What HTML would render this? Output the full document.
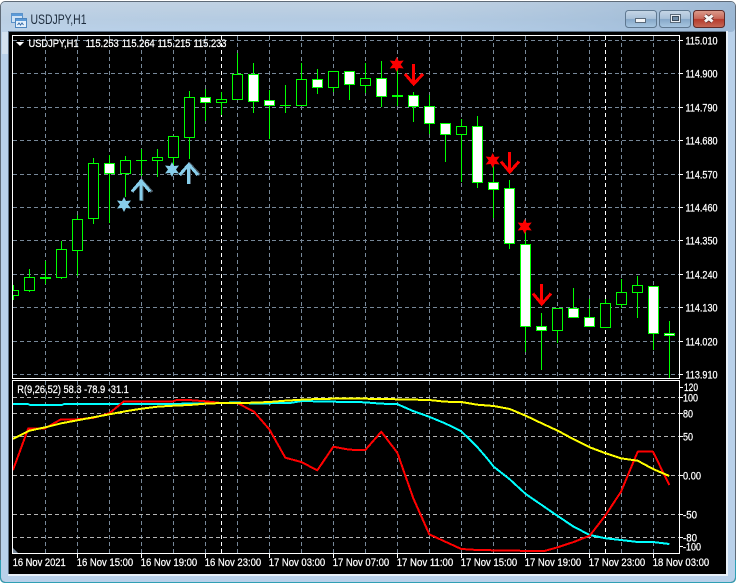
<!DOCTYPE html>
<html><head><meta charset="utf-8"><title>USDJPY,H1</title>
<style>
html,body{margin:0;padding:0;background:#fff;width:737px;height:584px;overflow:hidden}
svg{position:absolute;left:0;top:0;display:block}
text{font-family:"Liberation Sans",sans-serif;fill:#fff;font-size:11px;stroke:#fff;stroke-width:.25px}
</style></head><body>
<svg width="737" height="584" viewBox="0 0 737 584" xmlns="http://www.w3.org/2000/svg">
<defs>
<linearGradient id="tb" x1="0" y1="0" x2="0" y2="1"><stop offset="0" stop-color="#c3d3e3"/><stop offset=".6" stop-color="#b4cbe2"/><stop offset="1" stop-color="#b7d0ea"/></linearGradient>
<linearGradient id="tr" x1="0" y1="0" x2="1" y2="0"><stop offset="0" stop-color="#c8d8e8" stop-opacity=".35"/><stop offset=".55" stop-color="#a8c2dc" stop-opacity=".1"/><stop offset="1" stop-color="#92b0cf" stop-opacity=".75"/></linearGradient>
<linearGradient id="btn" x1="0" y1="0" x2="0" y2="1"><stop offset="0" stop-color="#c6d6e6"/><stop offset=".48" stop-color="#a9c1d9"/><stop offset=".52" stop-color="#86a8c8"/><stop offset="1" stop-color="#a9c7e2"/></linearGradient>
<linearGradient id="cls" x1="0" y1="0" x2="0" y2="1"><stop offset="0" stop-color="#dc9c8c"/><stop offset=".48" stop-color="#c8685a"/><stop offset=".52" stop-color="#b53a2c"/><stop offset="1" stop-color="#c56a58"/></linearGradient>
<clipPath id="main"><rect x="13" y="36" width="666" height="342"/></clipPath>
<clipPath id="sub"><rect x="13" y="381" width="666" height="172"/></clipPath>
</defs>

<!-- window frame -->
<rect x="0.5" y="1.5" width="735" height="581" rx="5" fill="#b9d1ea" stroke="#5f6b78"/>
<rect x="1" y="2" width="734" height="30" rx="4" fill="url(#tb)"/>
<rect x="1" y="2" width="734" height="30" rx="4" fill="url(#tr)"/>
<rect x="2" y="32" width="6" height="22" fill="#d4e2f0"/>
<path d="M0.5 560V577.5Q0.5 582.5 5.5 582.5H730.5Q735.5 582.5 735.5 577.5V560" fill="none" stroke="#2f9fb4"/>
<rect x="8" y="31" width="720" height="545" fill="#e8f0f8"/>
<rect x="8" y="31" width="718" height="543" fill="#5d7186"/>
<rect x="9" y="32" width="717" height="542" fill="#000"/>

<!-- title icon -->
<g shape-rendering="crispEdges">
<rect x="11.5" y="13.5" width="11" height="9" fill="#cfe2f5" stroke="#5b92c9"/>
<rect x="12" y="14" width="10" height="2" fill="#5b9ad8"/>
<rect x="15.5" y="18.5" width="11" height="9" fill="#e4f0fb" stroke="#4d86bf"/>
<rect x="16" y="19" width="10" height="2" fill="#5b9ad8"/>
</g>
<path d="M17.5 25l1.5-2 1.5 2 1.5-2 1.5 2" fill="none" stroke="#3a6ea8" stroke-width="1"/>
<text x="30.5" y="24" textLength="56" lengthAdjust="spacingAndGlyphs" style="fill:#1c2b3c;font-size:13.5px;stroke:none">USDJPY,H1</text>

<!-- window buttons -->
<rect x="625.5" y="10.5" width="31" height="17" rx="3" fill="url(#btn)" stroke="#5f7890"/>
<rect x="659.5" y="10.5" width="31" height="17" rx="3" fill="url(#btn)" stroke="#5f7890"/>
<rect x="693.5" y="10.5" width="31" height="17" rx="3" fill="url(#cls)" stroke="#5e2a28"/>
<rect x="635.5" y="18.5" width="10" height="4" fill="#f4f6f8" stroke="#5a6a7a"/>
<rect x="670.5" y="14.5" width="10" height="8" fill="#e8eef4" stroke="#5a6a7a"/>
<rect x="672.5" y="16.5" width="6" height="4" fill="#6f8ba6" stroke="#3c4c5c"/>
<path d="M705 15.5L712.5 21.5M712.5 15.5L705 21.5" stroke="#5e2a28" stroke-width="4.5" fill="none"/>
<path d="M705 15.5L712.5 21.5M712.5 15.5L705 21.5" stroke="#f6f6f6" stroke-width="3" fill="none"/>

<!-- panel borders -->
<g fill="none" stroke="#fff" shape-rendering="crispEdges">
<rect x="12.5" y="35.5" width="667" height="343"/>
<rect x="12.5" y="380.5" width="667" height="173"/>
</g>

<!-- main grid -->
<g clip-path="url(#main)" shape-rendering="crispEdges">
<path stroke="#778899" stroke-dasharray="4 3" fill="none" d="M13 40.5H679M13 73.5H679M13 107.5H679M13 140.5H679M13 174.5H679M13 207.5H679M13 240.5H679M13 274.5H679M13 307.5H679M13 341.5H679M13 374.5H679
M45.5 36V378M77.5 36V378M109.5 36V378M141.5 36V378M173.5 36V378M205.5 36V378M237.5 36V378M269.5 36V378M301.5 36V378M333.5 36V378M365.5 36V378M397.5 36V378M429.5 36V378M461.5 36V378M493.5 36V378M525.5 36V378M557.5 36V378M589.5 36V378M621.5 36V378M653.5 36V378"/>
<path stroke="#fff" stroke-dasharray="4 3" fill="none" d="M221.5 36V378M605.5 36V378"/>
</g>

<!-- price ticks -->
<path stroke="#fff" fill="none" shape-rendering="crispEdges" d="M680 40.5h3M680 73.5h3M680 107.5h3M680 140.5h3M680 174.5h3M680 207.5h3M680 240.5h3M680 274.5h3M680 307.5h3M680 341.5h3M680 374.5h3
M680 387.5h3M680 397.5h3M680 413.5h3M680 436.5h3M680 475.5h3M680 514.5h3M680 537.5h3M680 546.5h3
M77.5 554v4M141.5 554v4M205.5 554v4M269.5 554v4M333.5 554v4M397.5 554v4M461.5 554v4M525.5 554v4M589.5 554v4M653.5 554v4"/>

<!-- candles -->
<g clip-path="url(#main)" shape-rendering="crispEdges" stroke="#00ff00" stroke-width="1">
<path fill="none" d="M13.5 285V300M29.5 269V292M45.5 261V284M61.5 241V279M77.5 215V276M93.5 158V224M109.5 155V223M125.5 156V197M141.5 149V176M157.5 149V177M173.5 136V165M189.5 91V159M205.5 89V121M221.5 92V115M237.5 53V100M253.5 63V113M269.5 90V139M285.5 85V113M301.5 63V106M317.5 69V94M333.5 71V92M349.5 71V100M365.5 63V93M381.5 61V107M397.5 68V106M413.5 92V122M429.5 95V134M445.5 123V162M461.5 119V182M477.5 116V188M493.5 165V218M509.5 180V249M525.5 232V352M541.5 313V370M557.5 308V343M573.5 288V318M589.5 299V327M605.5 299V328M621.5 279V308M637.5 276V318M653.5 286V350M669.5 321V378
M136 160.5H147M280 105.5H291"/>
<g fill="#000">
<rect x="8.5" y="290.5" width="10" height="5"/>
<rect x="24.5" y="277.5" width="10" height="13"/>
<rect x="40.5" y="277.5" width="10" height="1"/>
<rect x="56.5" y="249.5" width="10" height="28"/>
<rect x="72.5" y="219.5" width="10" height="31"/>
<rect x="88.5" y="163.5" width="10" height="55"/>
<rect x="120.5" y="160.5" width="10" height="13"/>
<rect x="152.5" y="157.5" width="10" height="3"/>
<rect x="168.5" y="136.5" width="10" height="21"/>
<rect x="184.5" y="97.5" width="10" height="40"/>
<rect x="216.5" y="99.5" width="10" height="3"/>
<rect x="232.5" y="74.5" width="10" height="25"/>
<rect x="296.5" y="79.5" width="10" height="26"/>
<rect x="328.5" y="71.5" width="10" height="16"/>
<rect x="360.5" y="78.5" width="10" height="7"/>
<rect x="392.5" y="95.5" width="10" height="1"/>
<rect x="456.5" y="126.5" width="10" height="8"/>
<rect x="552.5" y="308.5" width="10" height="22"/>
<rect x="600.5" y="303.5" width="10" height="24"/>
<rect x="616.5" y="292.5" width="10" height="12"/>
<rect x="632.5" y="285.5" width="10" height="7"/>
</g>
<g fill="#fff">
<rect x="104.5" y="163.5" width="10" height="10"/>
<rect x="200.5" y="97.5" width="10" height="5"/>
<rect x="248.5" y="74.5" width="10" height="27"/>
<rect x="264.5" y="100.5" width="10" height="5"/>
<rect x="312.5" y="79.5" width="10" height="8"/>
<rect x="344.5" y="71.5" width="10" height="13"/>
<rect x="376.5" y="78.5" width="10" height="18"/>
<rect x="408.5" y="95.5" width="10" height="11"/>
<rect x="424.5" y="106.5" width="10" height="17"/>
<rect x="440.5" y="123.5" width="10" height="11"/>
<rect x="472.5" y="126.5" width="10" height="56"/>
<rect x="488.5" y="182.5" width="10" height="7"/>
<rect x="504.5" y="188.5" width="10" height="55"/>
<rect x="520.5" y="244.5" width="10" height="82"/>
<rect x="536.5" y="326.5" width="10" height="4"/>
<rect x="568.5" y="308.5" width="10" height="9"/>
<rect x="584.5" y="317.5" width="10" height="9"/>
<rect x="648.5" y="286.5" width="10" height="47"/>
<rect x="664.5" y="333.5" width="10" height="2"/>
</g>
</g>

<!-- stars -->
<g fill="#87ceeb">
<polygon points="124,197 126,201 131,200.5 128,204.5 131,208.5 126,208 124,212 122,208 117,208.5 120,204.5 117,200.5 122,201"/>
<polygon points="172,162 174,166 179,165.5 176,169.5 179,173.5 174,173 172,177 170,173 165,173.5 168,169.5 165,165.5 170,166"/>
</g>
<g fill="#ff0000">
<polygon points="396.7,57 398.7,61 403.7,60.5 400.7,64.5 403.7,68.5 398.7,68 396.7,72 394.7,68 389.7,68.5 392.7,64.5 389.7,60.5 394.7,61"/>
<polygon points="492.7,153 494.7,157 499.7,156.5 496.7,160.5 499.7,164.5 494.7,164 492.7,168 490.7,164 485.7,164.5 488.7,160.5 485.7,156.5 490.7,157"/>
<polygon points="524.7,219 526.7,223 531.7,222.5 528.7,226.5 531.7,230.5 526.7,230 524.7,234 522.7,230 517.7,230.5 520.7,226.5 517.7,222.5 522.7,223"/>
</g>

<!-- arrows -->
<g fill="none" stroke-width="3" shape-rendering="crispEdges">
<g stroke="#4a5a66">
<path d="M142 182V201M132 192L142 181L152 192"/>
<path d="M189.7 165V184M180 175L189.7 164L199.7 175"/>
</g>
<g stroke="#87ceeb">
<path d="M141 181V200.5M132 191.5L141 181L150 191.5"/>
<path d="M188.7 164.5V184M179.5 175L188.7 164.5L198 175"/>
</g>
<g stroke="#ff0000">
<path d="M413.7 64V84M405 74L413.7 84L423 74"/>
<path d="M509.7 152V172M501 161.5L509.7 172L519 161.5"/>
<path d="M541.7 284V304M533 293.5L541.7 304L551 293.5"/>
</g>
</g>

<!-- sub grid -->
<g clip-path="url(#sub)" shape-rendering="crispEdges">
<path stroke="#778899" stroke-dasharray="4 3" fill="none" d="M45.5 381V553M77.5 381V553M109.5 381V553M141.5 381V553M173.5 381V553M205.5 381V553M237.5 381V553M269.5 381V553M301.5 381V553M333.5 381V553M365.5 381V553M397.5 381V553M429.5 381V553M461.5 381V553M493.5 381V553M525.5 381V553M557.5 381V553M589.5 381V553M621.5 381V553M653.5 381V553"/>
<path stroke="#b4b4b4" stroke-dasharray="4 3" fill="none" d="M13 397.5H679M13 413.5H679M13 436.5H679M13 475.5H679M13 514.5H679M13 537.5H679"/>
<path stroke="#fff" stroke-dasharray="4 3" fill="none" d="M221.5 381V553M605.5 381V553"/>
</g>
<polygon points="13,548 13,553 18,553" fill="#778899"/>

<!-- indicator lines -->
<g clip-path="url(#sub)" fill="none" stroke-width="2" shape-rendering="crispEdges" stroke-linejoin="round">
<polyline stroke="#00ffff" points="13,404 28,404 30,405 62,405 64,404 173,404 190,403.5 221,403 237,402.5 253,403.5 290,403 301.7,401 333,401.7 365,402.3 381,403.7 397,404 413,411 429,416.7 445,423.3 461,431 477,446.7 487,458.3 493.7,466.7 509.7,479.3 525.7,494 541.7,505 557.7,516 573.7,526.7 589.7,535 605.7,538.3 621,540 637.7,542 653,542 669.3,544"/>
<polyline stroke="#ff0000" points="13,470 28.3,428.3 45,428.3 61,419.3 77,419.3 93,418 109.3,413.3 124,401.3 173,401.3 176.7,400 189,400 205.3,401.3 221.3,403 237.3,403 254,411.7 269.3,429.3 285.3,457.7 301.3,462 317.3,470.3 333.3,446.7 349.3,449.7 365.3,450 381.3,431.7 397.3,452.7 413.3,498.3 429.3,534.3 445.3,541.7 461.3,549 477.3,550 493.7,550.3 509.7,550.3 525.7,551 544.3,551 557.7,547.3 573.7,542 589.7,535.7 605.7,515 621,491.7 637.7,451.7 653,451.7 669.3,485"/>
<polyline stroke="#ffff00" points="13,439 29.3,430.7 45.3,427.3 61.3,423.3 77.3,420.3 93.3,417.3 109.3,414.3 125.3,411.3 141.3,408.7 157.3,406.7 173.3,405.7 189.3,405 205.3,403.7 221.3,403 237.3,403 253.3,402.7 269.3,402 285.3,400.7 301.3,399.7 317.3,399 333.3,398.7 365,398.7 397.3,399.3 429.3,400 445.3,401.7 461.3,402 477.3,404.7 493.7,406 509.7,409 525.7,415.7 541.7,423.3 557.7,430.7 573.7,439.3 589.7,447.3 605.7,453.3 621,458.3 637.7,460.7 653,469 669.3,476"/>
</g>

<!-- header labels -->
<polygon points="16,42 24,42 20,46" fill="#fff"/>
<text x="28.5" y="47" textLength="50" lengthAdjust="spacingAndGlyphs">USDJPY,H1</text>
<text x="85.7" y="47" textLength="33" lengthAdjust="spacingAndGlyphs">115.253</text>
<text x="121.7" y="47" textLength="33" lengthAdjust="spacingAndGlyphs">115.264</text>
<text x="157.5" y="47" textLength="33" lengthAdjust="spacingAndGlyphs">115.215</text>
<text x="193.5" y="47" textLength="33" lengthAdjust="spacingAndGlyphs">115.233</text>
<text x="17.3" y="393" textLength="111.5" lengthAdjust="spacingAndGlyphs">R(9,26,52) 58.3 -78.9 -31.1</text>

<!-- price labels -->
<g>
<text x="685.5" y="44.5" textLength="32" lengthAdjust="spacingAndGlyphs">115.010</text>
<text x="685.5" y="77.5" textLength="32" lengthAdjust="spacingAndGlyphs">114.900</text>
<text x="685.5" y="111.5" textLength="32" lengthAdjust="spacingAndGlyphs">114.790</text>
<text x="685.5" y="144.5" textLength="32" lengthAdjust="spacingAndGlyphs">114.680</text>
<text x="685.5" y="178.5" textLength="32" lengthAdjust="spacingAndGlyphs">114.570</text>
<text x="685.5" y="211.5" textLength="32" lengthAdjust="spacingAndGlyphs">114.460</text>
<text x="685.5" y="244.5" textLength="32" lengthAdjust="spacingAndGlyphs">114.350</text>
<text x="685.5" y="278.5" textLength="32" lengthAdjust="spacingAndGlyphs">114.240</text>
<text x="685.5" y="311.5" textLength="32" lengthAdjust="spacingAndGlyphs">114.130</text>
<text x="685.5" y="345.5" textLength="32" lengthAdjust="spacingAndGlyphs">114.020</text>
<text x="685.5" y="378.5" textLength="32" lengthAdjust="spacingAndGlyphs">113.910</text>
<text x="684" y="391" textLength="14" lengthAdjust="spacingAndGlyphs">120</text>
<text x="683" y="401.5" textLength="15" lengthAdjust="spacingAndGlyphs">100</text>
<text x="683" y="417.5" textLength="10" lengthAdjust="spacingAndGlyphs">80</text>
<text x="683" y="440.5" textLength="10" lengthAdjust="spacingAndGlyphs">50</text>
<text x="683" y="479.5" textLength="18" lengthAdjust="spacingAndGlyphs">0.00</text>
<text x="683" y="518.5" textLength="14" lengthAdjust="spacingAndGlyphs">-50</text>
<text x="683" y="541.5" textLength="14" lengthAdjust="spacingAndGlyphs">-80</text>
<text x="683" y="550.5" textLength="18" lengthAdjust="spacingAndGlyphs">-100</text>
</g>

<!-- time labels -->
<g>
<text x="12.7" y="566" textLength="53" lengthAdjust="spacingAndGlyphs">16 Nov 2021</text>
<text x="76.7" y="566" textLength="56.5" lengthAdjust="spacingAndGlyphs">16 Nov 15:00</text>
<text x="140.7" y="566" textLength="56.5" lengthAdjust="spacingAndGlyphs">16 Nov 19:00</text>
<text x="204.7" y="566" textLength="56.5" lengthAdjust="spacingAndGlyphs">16 Nov 23:00</text>
<text x="268.7" y="566" textLength="56.5" lengthAdjust="spacingAndGlyphs">17 Nov 03:00</text>
<text x="332.7" y="566" textLength="56.5" lengthAdjust="spacingAndGlyphs">17 Nov 07:00</text>
<text x="396.7" y="566" textLength="56.5" lengthAdjust="spacingAndGlyphs">17 Nov 11:00</text>
<text x="460.7" y="566" textLength="56.5" lengthAdjust="spacingAndGlyphs">17 Nov 15:00</text>
<text x="524.7" y="566" textLength="56.5" lengthAdjust="spacingAndGlyphs">17 Nov 19:00</text>
<text x="588.7" y="566" textLength="56.5" lengthAdjust="spacingAndGlyphs">17 Nov 23:00</text>
<text x="652.7" y="566" textLength="56.5" lengthAdjust="spacingAndGlyphs">18 Nov 03:00</text>
</g>
</svg>
</body></html>
